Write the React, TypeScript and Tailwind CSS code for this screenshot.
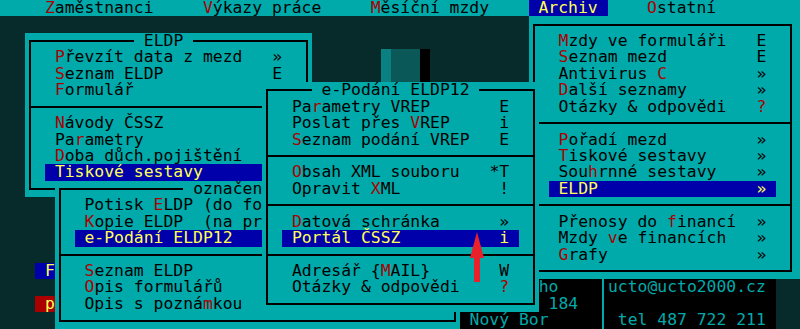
import React from 'react';

type MenuItem =
    | { sep: true }
    | { sep?: false; label: string; hot?: number; keyText?: string; keyRed?: boolean; active?: boolean };

const CYAN = 'bg-[#00aaaa]';

// one text row inside a drop-down menu
const ItemRow: React.FC<{ item: MenuItem }> = ({ item }) => {
    if (item.sep) {
        return (
            <div className="h-[16.45px] -mx-[4.94px] flex items-center">
                <div className="h-[2px] w-full bg-black" />
            </div>
        );
    }
    const { label, hot, keyText = '', keyRed, active } = item;
    const before = hot === undefined ? label : label.slice(0, hot);
    const hotChar = hot === undefined ? '' : label[hot];
    const after = hot === undefined ? '' : label.slice(hot + 1);
    return (
        <div
            className={`mx-[9.88px] px-[9.88px] h-[16.45px] flex justify-between whitespace-pre ${
                active ? 'bg-[#0000aa] text-[#ffff55]' : 'text-black'
            }`}
        >
            <span>
                {before}
                <span className={active ? '' : 'text-[#aa0000]'}>{hotChar}</span>
                {after}
            </span>
            <span className={!active && keyRed ? 'text-[#aa0000]' : ''}>{keyText}</span>
        </div>
    );
};

interface WindowProps {
    className: string;
    items: MenuItem[];
    title?: string;
    titleClass?: string;
    frameClass?: string;
    bodyClass?: string;
}

const MenuWindow: React.FC<WindowProps> = ({
    className,
    items,
    title,
    titleClass = '',
    frameClass = 'inset-x-[3.94px]',
    bodyClass = 'px-[9.88px]',
}) => (
    <div className={`relative ${CYAN} ${className}`}>
        <div className={`absolute inset-y-[7.2px] ${frameClass} border-2 border-black`} />
        {title && (
            <div className={`absolute top-0 h-[16.45px] ${CYAN} text-black whitespace-pre ${titleClass}`}>{title}</div>
        )}
        <div className={`relative pt-[16.45px] ${bodyClass}`}>
            {items.map((it, i) => (
                <ItemRow key={i} item={it} />
            ))}
        </div>
    </div>
);

const archivItems: MenuItem[] = [
    { label: 'Mzdy ve formuláři', hot: 0, keyText: 'E' },
    { label: 'Seznam mezd', hot: 0, keyText: 'E' },
    { label: 'Antivirus C', hot: 10, keyText: '»' },
    { label: 'Další seznamy', hot: 0, keyText: '»' },
    { label: 'Otázky & odpovědi', keyText: '?', keyRed: true },
    { sep: true },
    { label: 'Pořadí mezd', hot: 0, keyText: '»' },
    { label: 'Tiskové sestavy', hot: 0, keyText: '»' },
    { label: 'Souhrnné sestavy', hot: 3, keyText: '»' },
    { label: 'ELDP', keyText: '»', active: true },
    { sep: true },
    { label: 'Přenosy do financí', hot: 11, keyText: '»' },
    { label: 'Mzdy ve financích', hot: 5, keyText: '»' },
    { label: 'Grafy', hot: 0, keyText: '»' },
];

const eldpItems: MenuItem[] = [
    { label: 'Převzít data z mezd', hot: 0, keyText: '»' },
    { label: 'Seznam ELDP', hot: 0, keyText: 'E' },
    { label: 'Formulář', hot: 0, keyText: 'E' },
    { sep: true },
    { label: 'Návody ČSSZ', hot: 0 },
    { label: 'Parametry', hot: 2 },
    { label: 'Doba důch.pojištění', hot: 0 },
    { label: 'Tiskové sestavy', active: true, keyText: '»' },
];

const printItems: MenuItem[] = [
    { label: 'Potisk ELDP (do formuláře)', hot: 7 },
    { label: 'Kopie ELDP  (na prázdný)', hot: 0 },
    { label: 'e-Podání ELDP12', active: true, keyText: '»' },
    { sep: true },
    { label: 'Seznam ELDP', hot: 0 },
    { label: 'Opis formulářů', hot: 0 },
    { label: 'Opis s poznámkou', hot: 12 },
];

const podaniItems: MenuItem[] = [
    { label: 'Parametry VREP', hot: 2, keyText: 'E' },
    { label: 'Poslat přes VREP', hot: 12, keyText: 'i' },
    { label: 'Seznam podání VREP', hot: 0, keyText: 'E' },
    { sep: true },
    { label: 'Obsah XML souboru', hot: 0, keyText: '*T' },
    { label: 'Opravit XML', hot: 8, keyText: '!' },
    { sep: true },
    { label: 'Datová schránka', hot: 0, keyText: '»' },
    { label: 'Portál ČSSZ', active: true, keyText: 'i' },
    { sep: true },
    { label: 'Adresář {MAIL}', hot: 9, keyText: 'W' },
    { label: 'Otázky & odpovědi', keyText: '?', keyRed: true },
];

const Hot: React.FC<{ children: React.ReactNode }> = ({ children }) => (
    <span className="text-[#aa0000]">{children}</span>
);

const App: React.FC = () => {
    return (
        <div className="relative w-[800px] h-[329px] overflow-hidden bg-[#072a2a] font-['DejaVu_Sans_Mono',monospace] text-[16.4px] leading-[16.45px] grid grid-cols-[5.5px_repeat(80,9.88px)_minmax(0,1fr)] grid-rows-[repeat(20,16.45px)]">
            {/* top menu bar */}
            <div className="col-span-full row-start-1 bg-[#00aaaa] pl-[5.5px] whitespace-pre text-black">
                {'    '}
                <Hot>Z</Hot>aměstnanci{'     '}
                <Hot>V</Hot>ýkazy práce{'     '}
                <Hot>M</Hot>ěsíční mzdy{'    '}
                <span className="bg-[#0000aa] text-[#ffff55]"> Archiv </span>
                {'    '}
                <Hot>O</Hot>statní
            </div>

            {/* bits of the screen behind the menus */}
            <div className="col-start-40 col-end-45 row-start-4 row-end-6 flex">
                <div className="w-[9.88px] bg-[#0a8080]" />
                <div className="w-[29.64px] bg-[#0a5858]" />
                <div className="flex-1 bg-black" />
            </div>
            <div className="col-start-5 col-end-7 row-start-17 bg-[#0000aa] text-[#ffff55] whitespace-pre"> F</div>
            <div className="col-start-5 col-end-7 row-start-19 bg-[#aa0000] text-[#ffff55] whitespace-pre"> p</div>

            <div className="col-start-48 col-end-80 row-start-18 row-end-21 bg-black text-[#00aaaa] flex">
                <div className="w-[138.32px] whitespace-pre">
                    <div>{'        ho'}</div>
                    <div>{'         184'}</div>
                    <div>{' Nový Bor'}</div>
                </div>
                <div className="w-[9.88px] flex justify-center">
                    <div className="w-[2px] bg-[#00aaaa]" />
                </div>
                <div className="flex-1 whitespace-pre">
                    <div>ucto@ucto2000.cz</div>
                    <div>{' '}</div>
                    <div>{' tel 487 722 211'}</div>
                </div>
            </div>

            {/* drop-down menus, back to front */}
            <MenuWindow
                className="col-start-55 col-end-83 row-start-2 row-end-18"
                items={archivItems}
                frameClass="left-[3.94px] right-[8.04px]"
                bodyClass="pl-[9.88px] pr-[13.98px]"
            />
            <MenuWindow
                className="col-start-4 col-end-33 row-start-3 row-end-13"
                items={eldpItems}
                title=" ELDP "
                titleClass="left-[108.68px]"
            />
            <MenuWindow
                className="col-start-7 col-end-48 row-start-12 row-end-21"
                items={printItems}
                title=" označených ELDP "
                titleClass="left-[128.44px]"
            />
            <MenuWindow
                className="col-start-28 col-end-56 row-start-6 row-end-20"
                items={podaniItems}
                title=" e-Podání ELDP12 "
                titleClass="left-[49.4px]"
            />

            {/* red pointer arrow */}
            <svg className="absolute left-[468px] top-[231px] w-[18px] h-[53px]" viewBox="0 0 18 53">
                <polygon points="9,1 16,27 12,27 12,51 6,51 6,27 2,27" fill="#e8212b" />
            </svg>
        </div>
    );
};

export default App;
